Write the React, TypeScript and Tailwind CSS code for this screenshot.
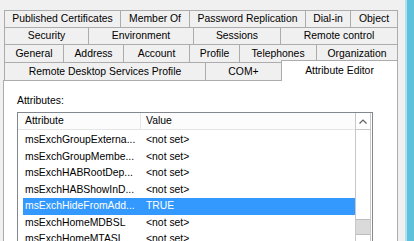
import type { ReactNode } from "react";

type TabProps = {
  label: string;
  className: string;
  last?: boolean;
};

const rows: [string, string][] = [
  ["msExchGroupExterna...", "<not set>"],
  ["msExchGroupMembe...", "<not set>"],
  ["msExchHABRootDep...", "<not set>"],
  ["msExchHABShowInD...", "<not set>"],
  ["msExchHideFromAdd...", "TRUE"],
  ["msExchHomeMDBSL", "<not set>"],
  ["msExchHomeMTASL", "<not set>"],
];

const selectedRow = 4;

function Tab({ label, className, last }: TabProps) {
  return (
    <div
      className={`flex items-center justify-center border-l border-t border-[#acacac] bg-[#f0f0f0] leading-[12px] ${
        last ? "border-r" : ""
      } ${className}`}
    >
      {label}
    </div>
  );
}

function TabRow({ children, className }: { children: ReactNode; className: string }) {
  return <div className={`flex ${className}`}>{children}</div>;
}

export default function App() {
  return (
    <div
      className="flex h-[241px] w-[414px] overflow-hidden bg-[#f0f0f0] text-[10.4px] text-black"
      style={{ fontFamily: '"Liberation Sans", Arial, sans-serif' }}
    >
      <div className="w-[405px] pt-[10px]">
        <div className="ml-[4px] w-[394px]">
          <TabRow className="h-[17px]">
            <Tab label="Published Certificates" className="w-[116px]" />
            <Tab label="Member Of" className="w-[69px]" />
            <Tab label="Password Replication" className="w-[116px]" />
            <Tab label="Dial-in" className="w-[45px]" />
            <Tab label="Object" className="w-[48px]" last />
          </TabRow>
          <TabRow className="h-[17px]">
            <Tab label="Security" className="w-[84px]" />
            <Tab label="Environment" className="w-[105px]" />
            <Tab label="Sessions" className="w-[87px]" />
            <Tab label="Remote control" className="w-[118px]" last />
          </TabRow>
          <TabRow className="h-[18px]">
            <Tab label="General" className="w-[59px]" />
            <Tab label="Address" className="w-[60px]" />
            <Tab label="Account" className="w-[66px]" />
            <Tab label="Profile" className="w-[50px]" />
            <Tab label="Telephones" className="w-[77px]" />
            <Tab label="Organization" className="w-[82px]" last />
          </TabRow>
          <TabRow className="h-[18px] items-end">
            <Tab label="Remote Desktop Services Profile" className="h-[18px] w-[201px]" />
            <Tab label="COM+" className="h-[18px] w-[76px]" />
            <div className="relative z-10 -mb-px flex h-[21px] w-[117px] items-center justify-center border-x border-t border-[#acacac] bg-white leading-[12px]">
              Attribute Editor
            </div>
          </TabRow>
        </div>

        <div className="ml-[3px] h-[200px] w-[395px] border border-[#acacac] bg-white px-[13px] pt-[14px]">
          <div className="leading-[12px]">Attributes:</div>
          <div className="mt-[5px] flex h-[140px] w-[356px] border border-[#828790] bg-white">
            <div className="flex-1">
              <div className="flex h-[17px] border-b border-[#e5e5e5] bg-[#fcfcfc] leading-[12px]">
                <div className="flex w-[123px] items-center border-r border-[#e5e5e5] pl-[7px]">
                  Attribute
                </div>
                <div className="flex items-center pl-[5px]">Value</div>
              </div>
              <div className="pt-[2px]">
                {rows.map(([name, value], i) => (
                  <div
                    key={name}
                    className={`ml-[5px] flex h-[16.5px] items-center leading-[12px] ${
                      i === selectedRow ? "bg-[#3399ff] text-white" : ""
                    }`}
                  >
                    <div className="w-[118px] whitespace-nowrap pl-[2px]">{name}</div>
                    <div className="pl-[5px]">{value}</div>
                  </div>
                ))}
              </div>
            </div>
            <div className="mr-px flex w-[16px] flex-col border-x border-[#c8c8c8]">
              <div className="flex h-[17px] items-center justify-center border-b border-[#c8c8c8]">
                <svg width="8" height="5" viewBox="0 0 8 5">
                  <path d="M0.5 4.5 L4 1 L7.5 4.5" fill="none" stroke="#606060" strokeWidth="1.2" />
                </svg>
              </div>
              <div className="h-[89px]" />
              <div className="h-[16px] border-y border-[#bcbcbc] bg-[#dadada]" />
            </div>
          </div>
        </div>
      </div>
      <div className="w-[9px] border-l-2 border-[#b3e0ee] bg-[#5ec2dc]" />
    </div>
  );
}
